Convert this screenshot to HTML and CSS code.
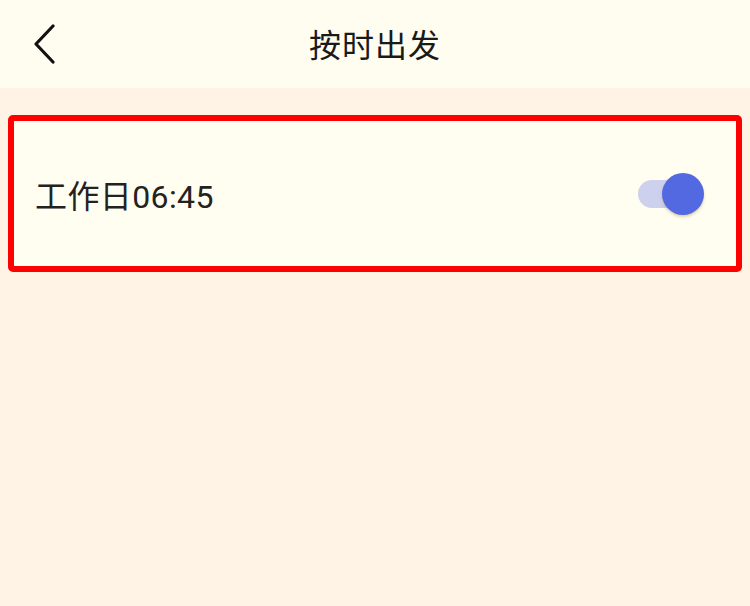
FILE: index.html
```html
<!DOCTYPE html>
<html lang="zh">
<head>
<meta charset="utf-8">
<link rel="stylesheet" href="styles.css">
</head>
<body>
<div class="page">
  <header class="topbar">
    <button class="back" aria-label="返回">
      <svg width="24" height="40" viewBox="0 0 24 40"><path d="M21 2 L4 20 L21 38" fill="none" stroke="#111" stroke-width="3.2" stroke-linecap="round" stroke-linejoin="round"/></svg>
    </button>
    <h1 class="title">按时出发</h1>
  </header>
  <main class="content">
    <div class="card">
      <span class="label">工作日06:45</span>
      <div class="switch"><span class="track"></span><span class="knob"></span></div>
    </div>
  </main>
</div>
</body>
</html>
```
FILE: styles.css
```css
html, body { margin: 0; padding: 0; }
body {
  width: 750px; height: 606px; overflow: hidden;
  background: #fef3e4;
  font-family: Roboto, "Noto Sans CJK SC", sans-serif;
  color: #222;
}
.page { display: flex; flex-direction: column; height: 100%; }
.topbar {
  height: 88px; background: #fffdf0;
  display: flex; align-items: center; justify-content: center;
  position: relative;
}
.back {
  position: absolute; left: 32px; top: 24px;
  background: none; border: 0; padding: 0; width: 24px; height: 40px;
  display: flex;
}
.title { margin: 0 0 2px 0; font-size: 32px; font-weight: 400; color: #1a1a1a; letter-spacing: 1px; }
.content { padding: 27px 8px 0 8px; }
.card {
  height: 145px; border: 6px solid #ff0000; border-radius: 5px;
  background: #fffef0;
  display: flex; align-items: center; justify-content: space-between;
  padding: 0 32px 0 21px;
}
.label { font-size: 32px; color: #222; letter-spacing: 0.4px; }
.switch { position: relative; width: 68px; height: 42px; display: flex; align-items: center; }
.track { width: 52px; height: 28px; border-radius: 14px; background: #cdd1ee; margin-left: 2px; }
.knob {
  position: absolute; right: 0; top: 0; width: 42px; height: 42px; border-radius: 50%;
  background: #5369e1; box-shadow: 0 2px 3px rgba(160,130,60,0.35);
}
```
